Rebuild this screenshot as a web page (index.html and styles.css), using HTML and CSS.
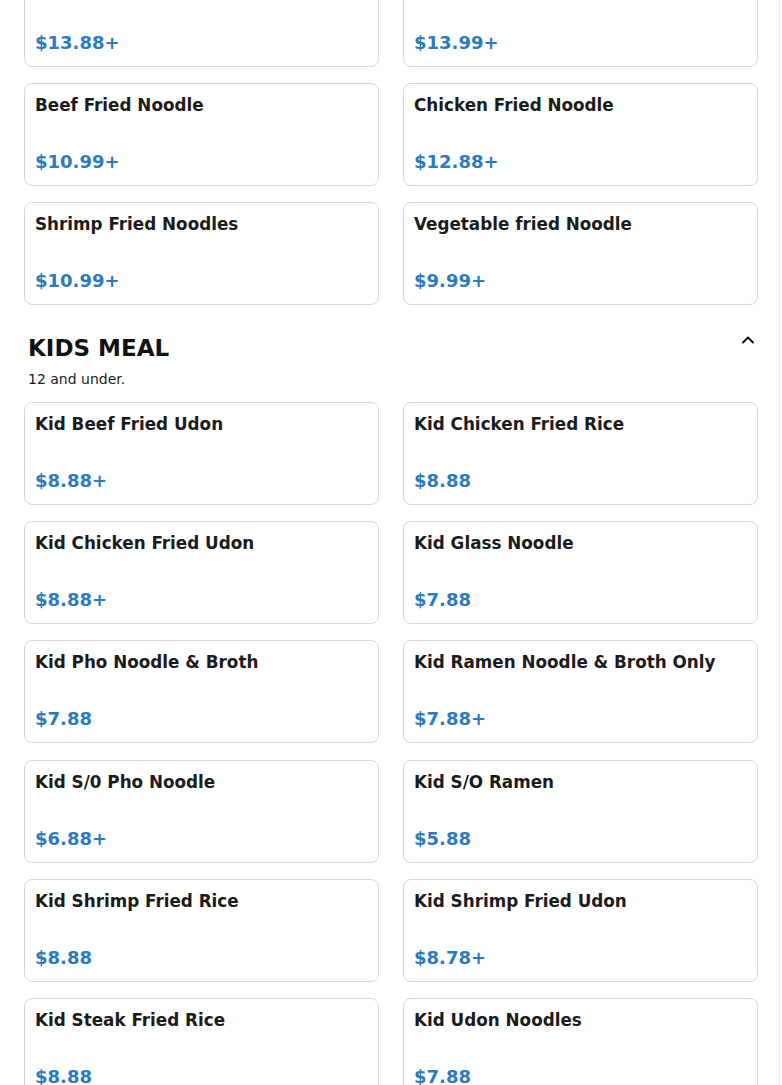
FILE: index.html
```html
<!DOCTYPE html>
<html lang="en">
<head>
<meta charset="utf-8">
<title>Menu</title>
<link rel="stylesheet" href="styles.css">
</head>
<body>
<div class="page">
  <main class="menu">
    <section class="category category-prev">
      <div class="grid">
        <div class="card"><div class="name">Pork Fried Noodle</div><div class="price">$13.88+</div></div>
        <div class="card"><div class="name">Seafood Fried Noodle</div><div class="price">$13.99+</div></div>
        <div class="card"><div class="name">Beef Fried Noodle</div><div class="price">$10.99+</div></div>
        <div class="card"><div class="name">Chicken Fried Noodle</div><div class="price">$12.88+</div></div>
        <div class="card"><div class="name">Shrimp Fried Noodles</div><div class="price">$10.99+</div></div>
        <div class="card"><div class="name">Vegetable fried Noodle</div><div class="price">$9.99+</div></div>
      </div>
    </section>
    <section class="category">
      <div class="cat-head">
        <div class="cat-text">
          <h2 class="cat-title">KIDS MEAL</h2>
          <p class="cat-desc">12 and under.</p>
        </div>
        <svg class="chev" width="14" height="10" viewBox="0 0 14 10" aria-hidden="true"><path d="M2 7.5 L7 2.5 L12 7.5" fill="none" stroke="#111" stroke-width="2" stroke-linecap="round" stroke-linejoin="round"/></svg>
      </div>
      <div class="grid">
        <div class="card"><div class="name">Kid Beef Fried Udon</div><div class="price">$8.88+</div></div>
        <div class="card"><div class="name">Kid Chicken Fried Rice</div><div class="price">$8.88</div></div>
        <div class="card"><div class="name">Kid Chicken Fried Udon</div><div class="price">$8.88+</div></div>
        <div class="card"><div class="name">Kid Glass Noodle</div><div class="price">$7.88</div></div>
        <div class="card"><div class="name">Kid Pho Noodle &amp; Broth</div><div class="price">$7.88</div></div>
        <div class="card"><div class="name">Kid Ramen Noodle &amp; Broth Only</div><div class="price">$7.88+</div></div>
        <div class="card"><div class="name">Kid S/0 Pho Noodle</div><div class="price">$6.88+</div></div>
        <div class="card"><div class="name">Kid S/O Ramen</div><div class="price">$5.88</div></div>
        <div class="card"><div class="name">Kid Shrimp Fried Rice</div><div class="price">$8.88</div></div>
        <div class="card"><div class="name">Kid Shrimp Fried Udon</div><div class="price">$8.78+</div></div>
        <div class="card"><div class="name">Kid Steak Fried Rice</div><div class="price">$8.88</div></div>
        <div class="card"><div class="name">Kid Udon Noodles</div><div class="price">$7.88</div></div>
      </div>
    </section>
  </main>
</div>
</body>
</html>
```
FILE: styles.css
```css
html, body {
  margin: 0;
  padding: 0;
  background: #ffffff;
  overflow: hidden;
}
body {
  font-family: "DejaVu Sans", sans-serif;
  color: #1b1b1b;
}
.page {
  width: 779px;
  height: 1085px;
  border-right: 1px solid #ececec;
  overflow: hidden;
}
.menu {
  width: 734px;
  padding: 0 0 0 24px;
  margin-top: -36px;
}
.category-prev {
  margin-bottom: 26.6px;
}
.grid {
  display: grid;
  grid-template-columns: 1fr 1fr;
  column-gap: 24px;
  row-gap: 16.2px;
}
.card {
  border: 1px solid #d8d8d8;
  border-radius: 8px;
  padding: 10px 10px;
  background: #fff;
}
.name {
  font-size: 16.8px;
  font-weight: bold;
  line-height: 22px;
  color: #1b1b1b;
}
.price {
  margin-top: 33px;
  font-size: 18px;
  font-weight: bold;
  line-height: 26px;
  color: #2b7bbf;
}
.cat-head {
  display: flex;
  justify-content: space-between;
  align-items: flex-start;
  padding: 0 4px;
  margin-bottom: 13px;
}
.cat-title {
  margin: 0;
  font-size: 23px;
  line-height: 32px;
  font-weight: bold;
  color: #111;
}
.cat-desc {
  margin: 5px 0 0;
  font-size: 14px;
  line-height: 20px;
  color: #1b1b1b;
}
.chev {
  margin-top: 3px;
  margin-right: -1px;
}
```
